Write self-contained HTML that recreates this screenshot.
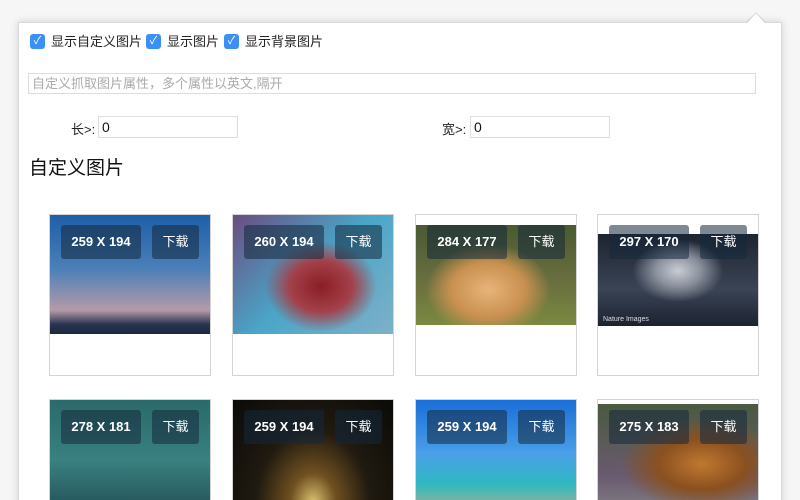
<!DOCTYPE html>
<html><head><meta charset="utf-8"><style>
*{margin:0;padding:0;box-sizing:border-box}
html,body{width:800px;height:500px;overflow:hidden}
body{background:#f6f6f6;font-family:"Liberation Sans","Noto Sans CJK SC",sans-serif;position:relative}
.panel{position:absolute;left:18px;top:22px;width:764px;height:600px;background:#fff;border:1px solid #d8d8d8;box-shadow:0 0 8px rgba(0,0,0,.15)}
.arrow{position:absolute;left:749px;top:15px;width:14px;height:14px;background:#fff;border-left:1px solid #d8d8d8;border-top:1px solid #d8d8d8;transform:rotate(45deg)}
.a{position:absolute}
.cb{position:absolute;top:34px;width:15px;height:15px;border-radius:3px;background:#3b8ff5;color:#fff;font-size:11px;line-height:15px;text-align:center}
.lbl{position:absolute;top:34px;font-size:13px;color:#222;line-height:16px}
.card{position:absolute;width:162px;height:162px;border:1px solid #d4d4d4;background:#fff;overflow:hidden}
.img{position:absolute;left:0;width:160px}
.tag{position:absolute;top:10px;left:11px;width:80px;height:34px;background:rgba(20,40,60,.55);border-radius:3px;color:#fff;font-size:13px;font-weight:bold;text-align:center;line-height:34px}
.dl{position:absolute;top:10px;left:102px;width:47px;height:34px;background:rgba(20,40,60,.55);border-radius:3px;color:#fff;font-size:13px;text-align:center;line-height:34px}
</style></head><body>
<div class="arrow"></div>
<div class="panel"></div>
<div class="arrow" style="border:none;top:17px;left:750px;width:12px;height:12px"></div>
<div class="cb" style="left:30px">✓</div><div class="lbl" style="left:51px">显示自定义图片</div>
<div class="cb" style="left:146px">✓</div><div class="lbl" style="left:167px">显示图片</div>
<div class="cb" style="left:224px">✓</div><div class="lbl" style="left:245px">显示背景图片</div>
<div class="a" style="left:28px;top:73px;width:728px;height:21px;border:1px solid #ddd;font-size:13px;color:#aaa;line-height:19px;padding-left:3px">自定义抓取图片属性，多个属性以英文,隔开</div>
<div class="a" style="left:71px;top:119px;font-size:13px;color:#222">长&gt;:</div>
<div class="a" style="left:98px;top:116px;width:140px;height:22px;border:1px solid #ddd;font-size:14px;line-height:20px;padding-left:3px;color:#111">0</div>
<div class="a" style="left:442px;top:119px;font-size:13px;color:#222">宽&gt;:</div>
<div class="a" style="left:470px;top:116px;width:140px;height:22px;border:1px solid #ddd;font-size:14px;line-height:20px;padding-left:3px;color:#111">0</div>
<div class="a" style="left:29px;top:153px;font-size:19px;color:#111">自定义图片</div>

<div class="card" style="left:49px;top:214px"><div class="img" style="top:0;height:119px;background:linear-gradient(#1f5ea8,#4b7fb8 45%,#b59aa8 80%,#2a3350 92%,#1a2a40)"></div><div class="tag">259 X 194</div><div class="dl">下载</div></div>
<div class="card" style="left:232px;top:214px"><div class="img" style="top:0;height:119px;background:radial-gradient(ellipse at 55% 60%,#8a1e25 0,#a3404a 25%,transparent 45%),linear-gradient(135deg,#6a4d80,#4aa6c8 50%,#7fb0c8)"></div><div class="tag">260 X 194</div><div class="dl">下载</div></div>
<div class="card" style="left:415px;top:214px"><div class="img" style="top:10px;height:100px;background:radial-gradient(ellipse at 45% 65%,#e8b47a 0,#c89050 30%,transparent 50%),linear-gradient(#4a5a30,#6b7040 60%,#7a8a40)"></div><div class="tag">284 X 177</div><div class="dl">下载</div></div>
<div class="card" style="left:597px;top:214px"><div class="img" style="top:19px;height:92px;background:radial-gradient(ellipse at 50% 40%,#c8ccd4 0,#8a909c 20%,transparent 40%),linear-gradient(#1e2430,#3a4456 60%,#1c2230)"></div><div class="tag">297 X 170</div><div class="dl">下载</div><div class="a" style="left:5px;top:101px;font-size:7px;color:#ddd">Nature Images</div></div>

<div class="card" style="left:49px;top:399px"><div class="img" style="top:0;height:120px;background:linear-gradient(#2a6a6a,#3a8080 50%,#1e4a50)"></div><div class="tag">278 X 181</div><div class="dl">下载</div></div>
<div class="card" style="left:232px;top:399px"><div class="img" style="top:0;height:120px;background:radial-gradient(ellipse at 50% 85%,#d8c070 0,#705020 20%,#201a10 50%,#0a0a08)"></div><div class="tag">259 X 194</div><div class="dl">下载</div></div>
<div class="card" style="left:415px;top:399px"><div class="img" style="top:0;height:120px;background:linear-gradient(#1a6ed8,#4aa0e8 45%,#30b8c0 70%,#c8b080)"></div><div class="tag">259 X 194</div><div class="dl">下载</div></div>
<div class="card" style="left:597px;top:399px"><div class="img" style="top:4px;height:120px;background:radial-gradient(ellipse at 65% 50%,#c07830 0,#8a5020 30%,transparent 55%),linear-gradient(#4a5a40,#6a5a70 60%,#8a8a88)"></div><div class="tag">275 X 183</div><div class="dl">下载</div></div>
</body></html>
